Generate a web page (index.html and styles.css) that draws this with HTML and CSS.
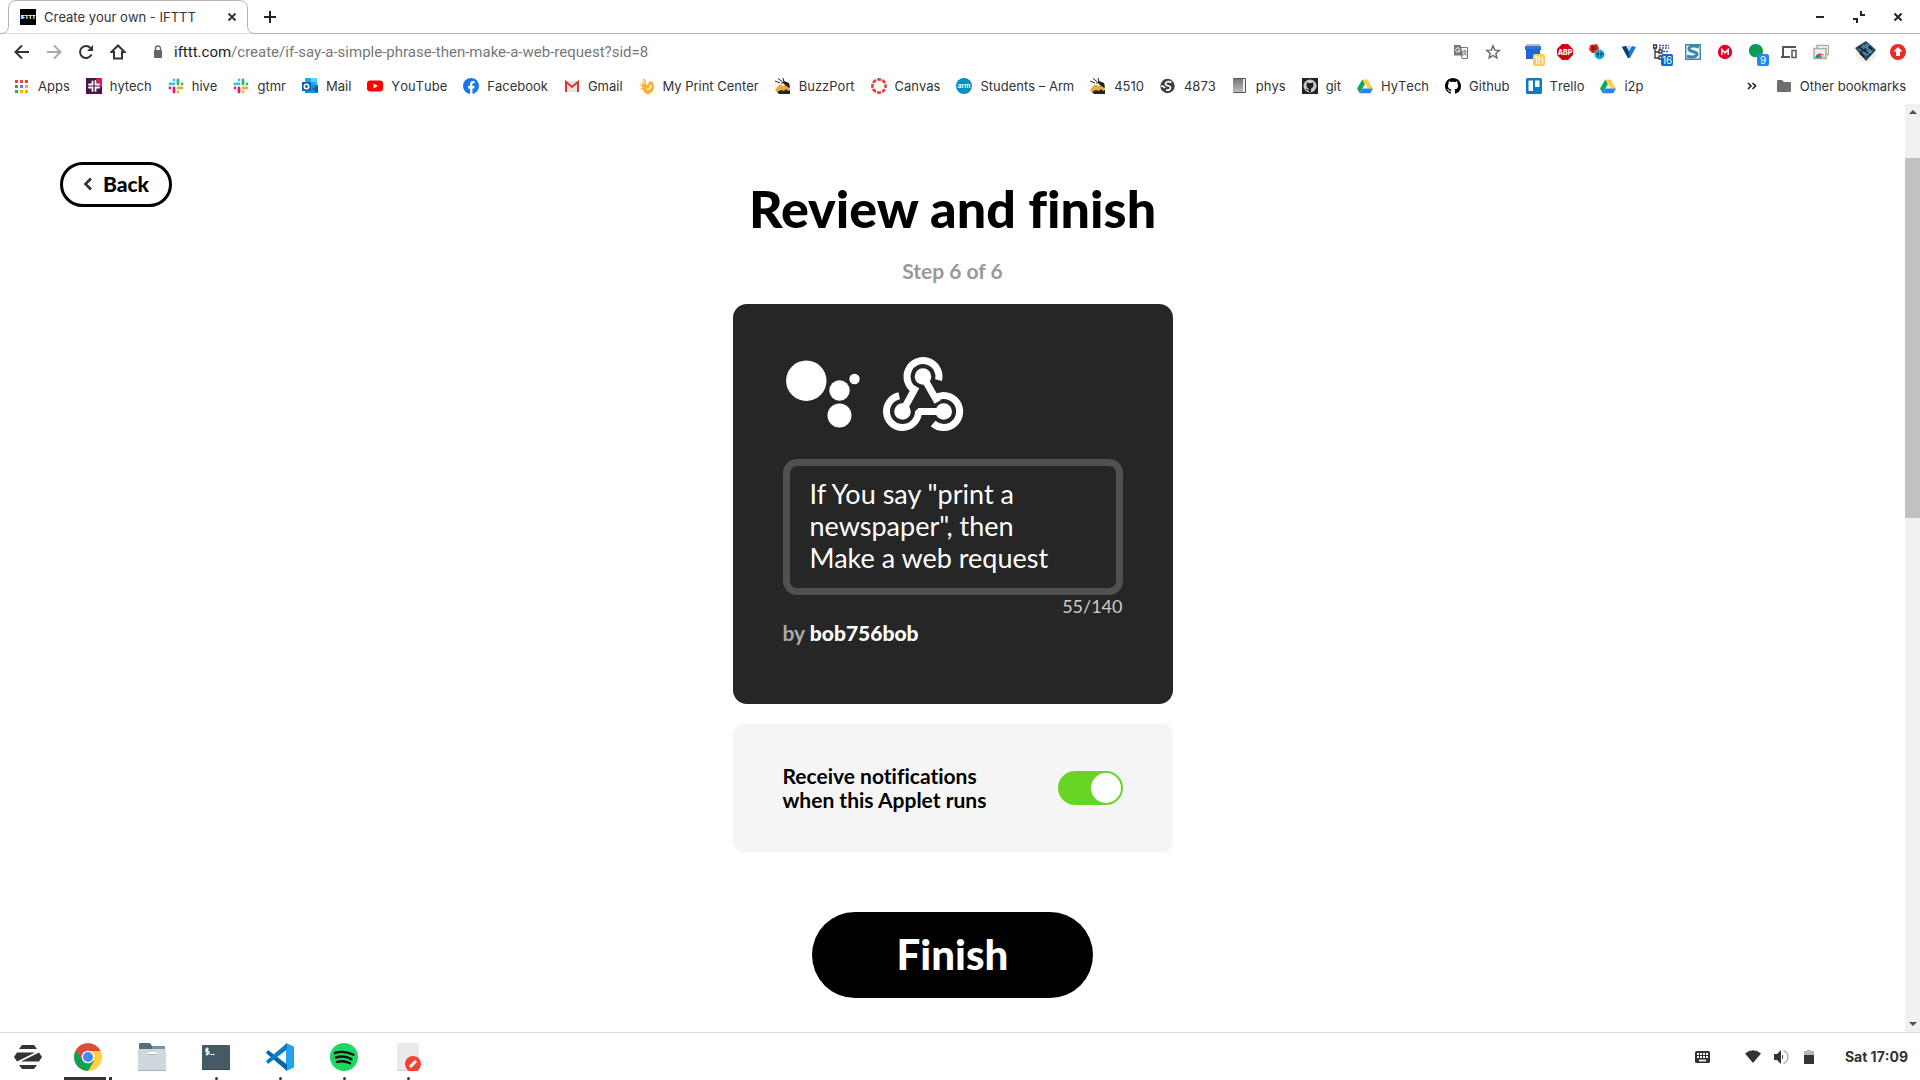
FILE: index.html
```html
<!DOCTYPE html>
<html lang="en">
<head>
<meta charset="utf-8">
<title>Create your own - IFTTT</title>
<link rel="stylesheet" href="styles.css">
</head>
<body>
<svg class="sprite" aria-hidden="true">
  <symbol id="slack" viewBox="0 0 16 16">
    <g fill="none" stroke-width="2.8" stroke-linecap="round">
      <path stroke="#36c5f0" d="M6 2v0M1.9 5.9h4.1"/><path stroke="#2eb67d" d="M10 1.9v4.1M14 6h0"/>
      <path stroke="#ecb22e" d="M10 10h4.1M10 14v0"/><path stroke="#e01e5a" d="M6 10v4.1M2 10h0"/>
    </g>
  </symbol>
  <symbol id="drive" viewBox="0 0 16 16">
    <path fill="#0da960" d="M5.3 1.5 0 10.6l2.7 4.6L8 6z"/><path fill="#ffcf48" d="M5.3 1.5h5.3l5.3 9.1h-5.3z"/><path fill="#2684fc" d="M2.7 15.2 5.4 10.6H16l-2.7 4.6z"/>
  </symbol>
  <symbol id="buzz" viewBox="0 0 16 16">
    <path d="M3 .5l4 3M8 0l1 4M0 3l5 2" stroke="#222" fill="none"/>
    <path fill="#222" d="M6 5l3-2 5 2 1 4-2 3-5-4z"/>
    <path fill="#e9a93c" d="M0 12l4-5 4-1 5 3 2 2v3l-8 1-5-1z"/>
    <path fill="#fff" d="M6 6l2-1 2 2-2 1z"/><path fill="#222" d="M2 14l4-2 3 1 2-2 2 2 2-1v4H4z"/>
  </symbol>
  <symbol id="octocat" viewBox="0 0 16 16">
    <path d="M8 0C3.58 0 0 3.58 0 8c0 3.54 2.29 6.53 5.47 7.59.4.07.55-.17.55-.38 0-.19-.01-.82-.01-1.49-2.01.37-2.53-.49-2.69-.94-.09-.23-.48-.94-.82-1.13-.28-.15-.68-.52-.01-.53.63-.01 1.08.58 1.23.82.72 1.21 1.87.87 2.33.66.07-.52.28-.87.51-1.07-1.78-.2-3.64-.89-3.64-3.95 0-.87.31-1.59.82-2.15-.08-.2-.36-1.02.08-2.12 0 0 .67-.21 2.2.82.64-.18 1.32-.27 2-.27s1.36.09 2 .27c1.53-1.04 2.2-.82 2.2-.82.44 1.1.16 1.92.08 2.12.51.56.82 1.27.82 2.15 0 3.07-1.87 3.75-3.65 3.95.29.25.54.73.54 1.48 0 1.07-.01 1.93-.01 2.2 0 .21.15.46.55.38A8.01 8.01 0 0 0 16 8c0-4.42-3.58-8-8-8z"/>
  </symbol>
</svg>

<header class="browser">
  <div class="tabstrip">
    <div class="tab">
      <svg class="tab-shape" viewBox="0 0 256 34" aria-hidden="true"><path d="M0 33.5C6 33.500 8.500 31 8.500 25V9Q8.500 .5 16 .5H239.500Q247.500 .5 247.500 9V25C247.500 31 250 33.500 256 33.500" fill="#fff" stroke="#b4b4b4"/></svg>
      <svg class="icon" viewBox="0 0 16 16" aria-hidden="true"><path d="M0 0h16v16H0z"/><text class="ifttt" x="8" y="10" text-anchor="middle">IFTTT</text></svg>
      <span class="tab-title">Create your own - IFTTT</span>
      <button class="tool close" aria-label="Close tab"><svg viewBox="0 0 16 16"><path d="M4.500 4.500l7 7M11.500 4.500l-7 7" stroke="#333" stroke-width="1.800"/></svg></button>
    </div>
    <button class="tool new-tab" aria-label="New tab"><svg viewBox="0 0 16 16"><path d="M8 2v12M2 8h12" stroke="#222" stroke-width="2"/></svg></button>
    <div class="window-buttons">
      <button class="tool" aria-label="Minimise"><svg viewBox="0 0 16 16"><path d="M4 8h8" stroke="#222" stroke-width="2"/></svg></button>
      <button class="tool" aria-label="Restore"><svg viewBox="0 0 16 16"><path d="M10 2v4h4M2 10h4v4" stroke="#222" stroke-width="2" fill="none"/></svg></button>
      <button class="tool" aria-label="Close"><svg viewBox="0 0 16 16"><path d="M4.500 4.500l7 7M11.500 4.500l-7 7" stroke="#222" stroke-width="2"/></svg></button>
    </div>
  </div>

  <div class="toolbar">
    <button class="tool" aria-label="Back"><svg viewBox="0 0 16 16"><path d="M15 8H2M8 1.500 1.500 8 8 14.500" stroke="#333" stroke-width="2" fill="none"/></svg></button>
    <button class="tool" aria-label="Forward"><svg viewBox="0 0 16 16"><path d="M1 8h13M8 1.500 14.500 8 8 14.500" stroke="#aaa" stroke-width="2" fill="none"/></svg></button>
    <button class="tool" aria-label="Reload"><svg viewBox="0 0 16 16"><path d="M13.500 10.500A6 6 0 1 1 12.500 4" stroke="#333" stroke-width="2" fill="none"/><path d="M15 1v6H9z" fill="#333"/></svg></button>
    <button class="tool" aria-label="Home"><svg viewBox="0 0 16 16"><path d="M8 1.500 1.500 8H4v6.500h8V8h2.500z" stroke="#333" stroke-width="2" fill="none"/></svg></button>
    <label class="address">
      <span class="tool"><svg viewBox="0 0 16 16" aria-label="Secure"><path d="M4.500 6.500h7v7h-7z" fill="#666" stroke="#666" stroke-linejoin="round"/><path d="M5.500 7V4.500a2.500 2.500 0 0 1 5 0V7" fill="none" stroke="#666" stroke-width="1.500"/></svg></span>
      <span class="url" contenteditable="true" role="textbox" aria-label="Address" spellcheck="false"><span class="host">ifttt.com</span>/create/if-say-a-simple-phrase-then-make-a-web-request?sid=8</span>
    </label>
    <div class="extensions">
      <button class="tool" aria-label="Translate"><svg viewBox="0 0 16 16"><path d="M7 3.500h7.500v11H9z" fill="#fff" stroke="#777"/><path d="M1 1h6.500l3 10.500H1z" fill="#777"/><path d="M6.800 5A2.200 2.200 0 1 0 7 6.500H5" stroke="#fff" fill="none"/><path d="M9.500 7h4M11.500 6v1M13 7c0 2-1 3-2.500 4M10.500 8l3 3.500" stroke="#777" fill="none"/></svg></button>
      <button class="tool" aria-label="Bookmark this page"><svg viewBox="0 0 16 16"><path d="M8 1.800l1.700 4.300 4.600.3-3.500 3 1.100 4.500L8 11.500l-3.900 2.400 1.100-4.500-3.500-3 4.600-.3z" stroke="#666" stroke-width="1.400" fill="none"/></svg></button>
    </div>
    <div class="extensions">
      <button class="tool" aria-label="Tab timer"><svg viewBox="0 0 16 16"><path d="M1 0h14v3H1z" fill="#bbb"/><path d="M0 2h16v4h-1v9H1V6H0z" fill="#1f66d0"/><path d="M0 2h16v3H0z" fill="#2d77e5"/></svg><span class="badge amber">1h</span></button>
      <button class="tool" aria-label="Adblock Plus"><svg viewBox="0 0 16 16"><path d="M5 0h6l5 5v6l-5 5H5l-5-5V5z" fill="#d4000f"/><text class="abp" x="8" y="11" text-anchor="middle">ABP</text></svg></button>
      <button class="tool" aria-label="Chips"><svg viewBox="0 0 16 16"><path d="M1 1l7-1 2 4-1 5H3L0 6z" fill="#e5332f"/><path d="M2 3h6M2 5h6M4 1v7" stroke="#611"/><circle cx="10.500" cy="10.500" r="5" fill="#16b5e5"/><path d="M7 10h3M9 8v5M12 8v5M12 10h3" stroke="#133"/></svg></button>
      <button class="tool" aria-label="Vimium"><svg viewBox="0 0 16 16"><path d="M1 3l4-1 3 5 3-5 4 1-6 11H7z" fill="#147bd1"/><path d="M1 3l4-1 3 6v6H7z" fill="#123c78"/><path d="M6 2h4L8 7z" fill="#9fd8f5"/></svg></button>
      <button class="tool" aria-label="Site tree"><svg viewBox="0 0 16 16"><path d="M.5 1h3v3h-3zM2 4v10h4M2 8h4M6 6h3v3H6zM6 12h3v3H6z" fill="none" stroke="#333" stroke-width="1.300"/><path d="M6 1.500h10M6 4h10M10 7.500h6" stroke="#355b9f" stroke-width="1.500" stroke-dasharray="2 1"/></svg><span class="badge blue">16</span></button>
      <button class="tool" aria-label="Stylish"><svg viewBox="0 0 16 16"><path d="M.7.7h14.600v14.600H.7z" fill="#eef6fa" stroke="#3b87ac" stroke-width="1.400"/><path d="M14 3C9 1 4 2 4 5s8 2.500 8 5-5 4-10 2" stroke="#3b87ac" stroke-width="3" fill="none"/></svg></button>
      <button class="tool" aria-label="Mega"><svg viewBox="0 0 16 16"><circle cx="8" cy="8" r="7.200" fill="#e8002a"/><path d="M4.800 11V5.500L8 8.800l3.200-3.300V11" fill="none" stroke="#fff" stroke-width="1.500"/></svg></button>
      <button class="tool" aria-label="Hangouts"><svg viewBox="0 0 16 16"><path d="M7 0a7 7 0 0 1 7 7c0 4-3 7-6 8v-2A6.600 6.600 0 1 1 7 0z" fill="#0b9d58"/></svg><span class="badge sky">9</span></button>
      <button class="tool" aria-label="Devices"><svg viewBox="0 0 16 16"><path d="M2 12V3h13M0 13h9" stroke="#555" stroke-width="2" fill="none"/><path d="M11 6.500h4v7h-4z" stroke="#555" stroke-width="1.500" fill="none"/></svg></button>
      <button class="tool" aria-label="Web captures"><svg viewBox="0 0 16 16"><path d="M4 4V1.500h11.500v9H13" fill="none" stroke="#aaa" stroke-width="1.500"/><path d="M1 4.500h12v10H1z" fill="#eee" stroke="#aaa" stroke-width="1.500"/><path d="M2.500 14a4.500 4.500 0 0 1 9 0z" fill="#db4437"/><path d="M2.500 14a4.500 4.500 0 0 1 1.500-3.500L7 14z" fill="#0f9d58"/><path d="M11.500 14a4.500 4.500 0 0 0-1-3H7v3z" fill="#ffcd40"/><circle cx="7" cy="12.800" r="1.800" fill="#4285f4"/></svg></button>
    </div>
    <div class="account">
      <button class="tool" aria-label="Profile"><svg class="avatar" viewBox="0 0 22 22"><circle cx="11" cy="11" r="10.500" fill="#f2eeee"/><path d="M0 7 11 0l10 9-10 11z" fill="#364450"/><path d="M3 8l5-3 2 2-5 3zM10 4l2-2 3 3-2 2zM7 12l8-5 3 2-7 6z" fill="#2e8dbd"/><path d="M5 12l4 4M9 9l6 5M14 5l3 4M4 6l4 3" stroke="#111" stroke-width="1.500"/><path d="M8 4l5 4M12 14l5-4" stroke="#9ab"/></svg></button>
      <button class="tool" aria-label="Update"><svg viewBox="0 0 16 16"><circle cx="8" cy="8" r="8" fill="#e62d27"/><path d="M8 3l4.500 4.500H10V12H6V7.500H3.500z" fill="#fff"/></svg></button>
    </div>
  </div>

  <nav class="bookmarks" aria-label="Bookmarks">
    <a href="#"><svg class="icon" viewBox="0 0 16 16"><path d="M1 2h3v3H1zM6 2h3v3H6zM11 2h3v3h-3z" fill="#ea4335"/><path d="M1 7h3v3H1zM1 12h3v3H1z" fill="#34a853"/><path d="M6 7h3v3H6z" fill="#4285f4"/><path d="M11 7h3v3h-3zM6 12h3v3H6zM11 12h3v3h-3z" fill="#fbad05"/></svg>Apps</a>
    <a href="#"><svg class="icon" viewBox="0 0 16 16"><path d="M0 0h16v16H0z" fill="#4a154b"/><path d="M10 0h6v9h-3z" fill="#d81e56"/><path d="M6.500 3.500v3H3M9.500 3v3.500h3.500M13 9.500H9.500v3.500M3 9.500h3.500V13" fill="none" stroke="#fff" stroke-width="1.800" stroke-linecap="round"/></svg>hytech</a>
    <a href="#"><svg class="icon"><use href="#slack"/></svg>hive</a>
    <a href="#"><svg class="icon"><use href="#slack"/></svg>gtmr</a>
    <a href="#"><svg class="icon" viewBox="0 0 16 16"><path d="M3 0h12v7H3z" fill="#28a8ea"/><path d="M9 0h6v4H9z" fill="#50d9ff"/><path d="M3 7h13v8H3z" fill="#1490df"/><path d="M10 11l6-4v8z" fill="#0a5fb5"/><path d="M0 4h9v9H0z" fill="#0f65b8"/><circle cx="4.500" cy="8.500" r="2.200" fill="none" stroke="#fff" stroke-width="1.500"/></svg>Mail</a>
    <a href="#"><svg class="icon" viewBox="0 0 16 16"><rect y="2.500" width="16" height="11" rx="3" fill="#f00"/><path d="M6.500 5.500v5L11 8z" fill="#fff"/></svg>YouTube</a>
    <a href="#"><svg class="icon" viewBox="0 0 16 16"><circle cx="8" cy="8" r="8" fill="#1478f0"/><path d="M7 16v-5.500H5V8h2V6.300C7 4.200 8.200 3 10 3l1.700.2v2h-1C9.700 5.200 9.400 5.800 9.400 6.500V8h2.200l-.4 2.500H9.400V16z" fill="#fff"/></svg>Facebook</a>
    <a href="#"><svg class="icon" viewBox="0 0 16 16"><path d="M1 3h14v11H1z" fill="#e7e3e3"/><path d="M2 14V4l6 5 6-5v10" fill="none" stroke="#d93a30" stroke-width="2"/></svg>Gmail</a>
    <a href="#"><svg class="icon" viewBox="0 0 16 16"><path d="M5 0c3 3 0 4 3 7 2-1 1-3 3-4 3 0 4 3 4 6 0 4-3 7-6 7-3 0-4-2-5-4L1 10l3-.5L0 6l4 1-2-4 4 3C5 4 4 2 5 0z" fill="#fbb034"/><path d="M8 11c2 1 4-1 4-4" stroke="#fff" stroke-width="1.500" fill="none"/></svg>My Print Center</a>
    <a href="#"><svg class="icon"><use href="#buzz"/></svg>BuzzPort</a>
    <a href="#"><svg class="icon" viewBox="0 0 16 16"><circle cx="8" cy="8" r="6.600" fill="none" stroke="#e63b36" stroke-width="2.600" stroke-dasharray="4 1.184" stroke-dashoffset="2"/></svg>Canvas</a>
    <a href="#"><svg class="icon" viewBox="0 0 16 16"><circle cx="8" cy="8" r="8" fill="#0091bd"/><text class="arm" x="8" y="10" text-anchor="middle">arm</text></svg>Students – Arm</a>
    <a href="#"><svg class="icon"><use href="#buzz"/></svg>4510</a>
    <a href="#"><svg class="icon" viewBox="0 0 16 16"><circle cx="7.500" cy="8" r="7.200" fill="#3c3e40"/><path d="M11.500 4.500C9 3 5.500 3.500 5.500 6s5 1 5 3.500S8 12.500 6 12M1 8c1.500 0 3 .5 4 2" fill="none" stroke="#fff" stroke-width="1.700"/></svg>4873</a>
    <a href="#"><svg class="icon" viewBox="0 0 16 16"><defs><linearGradient id="book" x2="0" y2="1"><stop stop-color="#777"/><stop offset="1" stop-color="#bbb"/></linearGradient></defs><path d="M1.500.5h12v14h-12z" fill="#eee" stroke="#555"/><path d="M1 1h10v13H1z" fill="url(#book)"/></svg>phys</a>
    <a href="#"><svg class="icon" viewBox="0 0 16 16"><path d="M0 0h16v16H0z" fill="#222"/><circle cx="8" cy="8" r="6.500" fill="#ccc"/><path d="M5 4l1 1h4l1-1 .5 3c0 2-1 3-2.500 3.500V14H7v-3C5.500 10 4.500 9 4.500 7z" fill="#222"/><path d="M4 11l3 1.500" stroke="#222"/></svg>git</a>
    <a href="#"><svg class="icon"><use href="#drive"/></svg>HyTech</a>
    <a href="#"><svg class="icon"><use href="#octocat"/></svg>Github</a>
    <a href="#"><svg class="icon" viewBox="0 0 16 16"><rect width="16" height="16" rx="1.500" fill="#0a7dc0"/><path d="M2.500 2.500H7v10.500H2.500zM9 2.500h4.500v6.500H9z" fill="#fff"/></svg>Trello</a>
    <a href="#"><svg class="icon"><use href="#drive"/></svg>i2p</a>
    <button class="tool more" aria-label="More bookmarks"><svg viewBox="0 0 16 16"><path d="M4 5l3 3-3 3M8.500 5l3 3-3 3" fill="none" stroke="#222" stroke-width="1.600"/></svg></button>
    <a href="#"><svg class="icon" viewBox="0 0 16 16"><path d="M1 3q0-1 1-1h4l2 2h6q1 0 1 1v8q0 1-1 1H2q-1 0-1-1z" fill="#6e6e6e"/></svg>Other bookmarks</a>
  </nav>
</header>

<div class="viewport">
  <main class="page">
    <button class="back"><svg viewBox="0 0 10 14" aria-hidden="true"><path d="M8 1.500 2.500 7 8 12.500" fill="none" stroke="#333" stroke-width="2.600"/></svg>Back</button>
    <form class="review">
      <h1>Review and finish</h1>
      <p class="step">Step 6 of 6</p>
      <section class="applet">
        <div class="services">
          <svg viewBox="0 0 80 80" role="img" aria-label="Google Assistant" fill="#fff"><circle cx="23.300" cy="28.700" r="20.200"/><circle cx="56.500" cy="38.500" r="10.200"/><circle cx="71.500" cy="27" r="5.200"/><circle cx="56.500" cy="63.500" r="12"/></svg>
          <svg viewBox="0 0 80 80" role="img" aria-label="Webhooks"><g fill="none" stroke="#fff" stroke-width="7"><path d="M55.600 28.100A16 16 0 1 0 32 38.400"/><path d="M33.200 34.500 19.500 59.500"/><path d="M16.200 43.800A16 16 0 1 0 35.400 61L37 59.500H60"/><path d="M40 24.500 54.600 50"/><path d="M52.700 45.600A16 16 0 1 1 50.100 71.500"/></g><g fill="#fff"><circle cx="40" cy="24.500" r="8.300"/><circle cx="19.500" cy="59.500" r="8.300"/><circle cx="60.700" cy="59.500" r="8.300"/></g></svg>
        </div>
        <textarea rows="3" aria-label="Applet title" spellcheck="false">If You say "print a
newspaper", then
Make a web request</textarea>
        <p class="count">55/140</p>
        <p class="author">by <b>bob756bob</b></p>
      </section>
      <section class="notify">
        <label for="notify">Receive notifications when this Applet runs</label>
        <input type="checkbox" id="notify" checked>
      </section>
      <button class="finish" type="button">Finish</button>
    </form>
  </main>
  <div class="scrollbar" aria-hidden="true">
    <svg viewBox="0 0 15 17"><path d="M4 10l4-4 4 4z" fill="#505050"/></svg>
    <div class="track"><div class="thumb"></div></div>
    <svg viewBox="0 0 15 17"><path d="M4 7l4 4 4-4z" fill="#505050"/></svg>
  </div>
</div>

<footer class="taskbar">
  <button class="app menu" aria-label="Menu"><svg viewBox="0 0 28 28"><g fill="#333"><path d="M8 2h12l3 4H5zM5 22h18l-3 4H8z"/><path d="M3 9.500h18L3 18.500l-3-4.500zM25 9.500l3 4.500-3 4.500H7z"/></g></svg></button>
  <button class="app active" aria-label="Chrome"><svg viewBox="0 0 28 28"><circle cx="14" cy="14" r="14" fill="#ffd040"/><path d="M14 14 1.900 7A14 14 0 0 0 14 28l6-10z" fill="#149e5b"/><path d="M1.900 7A14 14 0 0 1 26.500 8H14l-6 9z" fill="#dc4d40"/><circle cx="14" cy="14" r="6.300" fill="#fff"/><circle cx="14" cy="14" r="5" fill="#4688f4"/></svg></button>
  <button class="app" aria-label="Files"><svg viewBox="0 0 28 28"><path d="M1 1q0-1 1-1h10l2 3h12q1 0 1 1v6H1z" fill="#546e7a"/><path d="M14 3h13v4H14z" fill="#7892a0"/><path d="M0 7q0-1 1-1h26q1 0 1 1v20q0 1-1 1H1q-1 0-1-1z" fill="#cfd8dd"/><path d="M10 9h8v2h-8z" fill="#fff"/><path d="M0 27.500h28M10 11.500h8" stroke="#a8b3b9"/></svg></button>
  <button class="app running" aria-label="Terminal"><svg viewBox="0 0 28 28"><rect y="2" width="28" height="25" rx="1" fill="#455a64"/><path d="M0 26.500h28" stroke="#37484f"/><path d="M7 6H4v2.500h3V11H3.500M5.200 4.500v8M8.500 11.500h4" stroke="#fff" stroke-width="1.200" fill="none"/></svg></button>
  <button class="app running" aria-label="Code"><svg viewBox="0 0 28 28"><path d="M20 0 28 3.500V24.500L20 28z" fill="#25a2f0"/><path d="M2 7 21 21.500V28L0 10z" fill="#0065a9"/><path d="M2 21 21 6.500V0L0 18z" fill="#0a7cc8"/></svg></button>
  <button class="app running" aria-label="Spotify"><svg viewBox="0 0 28 28"><circle cx="14" cy="14" r="14" fill="#1ed760"/><path d="M5 10c6-2 13-1 18.500 1.800M6 14.500c5-1.500 11-1 15.500 1.700M7 18.800c4-1 9-.7 13 1.500" fill="none" stroke="#111" stroke-width="2.400" stroke-linecap="round"/></svg></button>
  <button class="app running" aria-label="Text editor"><svg viewBox="0 0 28 28"><path d="M3 0h22v28H3z" fill="#eaeaea"/><path d="M3 28h22" stroke="#bbb"/><circle cx="19" cy="21" r="8" fill="#f44336"/><path d="M16 24l6-6" stroke="#fff" stroke-width="3"/></svg></button>
  <div class="tray">
    <svg viewBox="0 0 16 16" aria-label="Keyboard"><rect x="0" y="2" width="15" height="12" rx="1.500" fill="#333"/><path d="M2 5h12M2 8h12" stroke="#fff" stroke-width="1.800" stroke-dasharray="2 1"/><path d="M4 11.500h7" stroke="#fff" stroke-width="1.800"/></svg>
    <svg class="wifi" viewBox="0 0 16 16" aria-label="Wi-Fi"><path d="M0 4.500Q8-2 16 4.500L8 14z" fill="#333"/></svg>
    <svg viewBox="0 0 16 16" aria-label="Volume"><path d="M1 5h3l4-4v14l-4-4H1zM9 5q2 3 0 6z" fill="#333"/><path d="M10.500 1.500a7 7 0 0 1 0 13" fill="none" stroke="#b5b5b5" stroke-width="1.500"/></svg>
    <svg viewBox="0 0 16 16" aria-label="Battery"><path d="M3 2h3V1h4v1h3v5H3z" fill="#b5b5b5"/><path d="M3 6h10v9H3z" fill="#333"/></svg>
    <time>Sat 17:09</time>
  </div>
</footer>
</body>
</html>
```

FILE: styles.css
```css
* {
  box-sizing: border-box;
}

body {
  margin: 0;
  min-height: 100vh;
  display: flex;
  flex-direction: column;
  background: #fff;
  color: #333;
  font: 13px/20px Inter, sans-serif;
  font-kerning: none;
}

button {
  margin: 0;
  padding: 0;
  border: 0;
  background: none;
  color: inherit;
  font: inherit;
  cursor: pointer;
}

h1,
p {
  margin: 0;
}

.sprite {
  display: none;
}

/* Browser chrome */

.icon {
  width: 16px;
  height: 16px;
  flex: none;
}

.tool {
  position: relative;
  flex: none;
  display: flex;
  align-items: center;
  justify-content: center;
  width: 32px;
  height: 32px;
}

.tool svg {
  width: 16px;
  height: 16px;
}

.tool .avatar {
  width: 22px;
  height: 22px;
}

.tabstrip {
  display: flex;
  align-items: center;
  height: 34px;
  border-bottom: 1px solid #b4b4b4;
}

.tab {
  position: relative;
  display: flex;
  align-items: center;
  gap: 8px;
  width: 256px;
  height: 34px;
  padding-left: 20px;
}

.tab-shape {
  position: absolute;
  left: 0;
  top: 0;
  width: 256px;
  height: 34px;
}

.tab > :not(.tab-shape) {
  position: relative;
}

.close {
  margin-left: auto;
  margin-right: 8px;
}

.new-tab {
  margin-left: -2px;
}

.ifttt {
  fill: #fff;
  font: 900 5px Inter, sans-serif;
}

.window-buttons {
  display: flex;
  gap: 7px;
  margin-left: auto;
  padding-right: 6px;
}

.toolbar {
  display: flex;
  align-items: center;
  height: 36px;
  padding: 0 6px;
}

.address {
  flex: 1;
  display: flex;
  align-items: center;
  margin-left: 8px;
  cursor: text;
}

.url {
  color: #777;
  font: 15px/20px Roboto, sans-serif;
  outline: none;
}

.host {
  color: #222;
}

.extensions {
  display: flex;
  margin-right: 8px;
}

.account {
  display: flex;
  margin-left: 5px;
}

.badge {
  position: absolute;
  left: 16px;
  top: 18px;
  min-width: 12px;
  padding: 0 1px;
  border-radius: 2px;
  color: #fff;
  font: 10px/12px Inter, sans-serif;
}

.amber {
  background: #fdcb62;
}

.blue {
  background: #1467c8;
}

.sky {
  background: #2588f0;
}

.abp {
  fill: #fff;
  font: 800 7px Inter, sans-serif;
}

.arm {
  fill: #fff;
  font: 600 7px Inter, sans-serif;
}

.bookmarks {
  display: flex;
  align-items: center;
  gap: 16px;
  height: 34px;
  padding: 0 14px 3px;
}

.bookmarks a {
  display: flex;
  align-items: center;
  gap: 8px;
  color: inherit;
  text-decoration: none;
  white-space: nowrap;
}

.more {
  width: 16px;
  margin-left: auto;
}

/* Page */

.viewport {
  flex: 1;
  display: flex;
}

.page {
  position: relative;
  flex: 1;
  color: #000;
  font-family: Lato, sans-serif;
  font-kerning: auto;
  font-variant-ligatures: none;
}

.back {
  position: absolute;
  left: 60px;
  top: 58px;
  display: flex;
  align-items: center;
  justify-content: center;
  gap: 10px;
  width: 112px;
  height: 45px;
  padding-bottom: 2px;
  border: 3px solid #000;
  border-radius: 23px;
  font-size: 21px;
  font-weight: 900;
}

.back svg {
  width: 10px;
  height: 14px;
}

.review {
  display: flex;
  flex-direction: column;
  align-items: center;
  padding: 74px 20px 34px;
}

h1 {
  font-size: 52px;
  font-weight: 900;
  line-height: 60px;
}

.step {
  margin: 20px 0;
  color: #999;
  font-size: 21px;
  font-weight: 700;
  line-height: 26px;
}

.applet,
.notify {
  width: 100%;
  max-width: 440px;
  padding: 50px;
}

.applet {
  border-radius: 14px;
  background: #262626;
  color: #fff;
}

.services {
  display: flex;
  gap: 20px;
  margin-top: -2px;
}

.services svg {
  width: 80px;
  height: 80px;
  overflow: visible;
}

.applet textarea {
  display: block;
  width: 100%;
  margin-top: 27px;
  padding: 12px 20px 14px;
  border: 7px solid #505050;
  border-radius: 14px;
  background: none;
  color: inherit;
  font: 27px/32px Lato, sans-serif;
  resize: none;
  overflow: hidden;
  outline: none;
}

.count {
  color: #ccc;
  font-size: 18px;
  line-height: 22px;
  text-align: right;
}

.author {
  padding: 3px 0 8px;
  color: #aaa;
  font-size: 21px;
  line-height: 26px;
  font-weight: 700;
}

.author b {
  color: #fff;
}

.notify {
  display: flex;
  align-items: center;
  justify-content: space-between;
  gap: 20px;
  margin: 20px 0 60px;
  padding: 40px 50px;
  border-radius: 10px;
  background: #f5f5f5;
  font-size: 21px;
  font-weight: 700;
  line-height: 24px;
}

.notify label {
  max-width: 220px;
}

.notify input {
  appearance: none;
  flex: none;
  width: 65px;
  height: 34px;
  margin: 0;
  padding: 2px;
  border-radius: 17px;
  background: #ccc;
}

.notify input::before {
  content: "";
  display: block;
  width: 30px;
  height: 30px;
  border-radius: 50%;
  background: #fff;
}

.notify input:checked {
  background: #67d426;
}

.notify input:checked::before {
  margin-left: auto;
}

.finish {
  width: 281px;
  height: 86px;
  padding-bottom: 2px;
  border-radius: 43px;
  background: #000;
  color: #fff;
  font-size: 42px;
  font-weight: 900;
}

.scrollbar {
  display: flex;
  flex-direction: column;
  width: 15px;
  background: #f1f1f1;
}

.scrollbar svg {
  width: 15px;
  height: 17px;
}

.track {
  flex: 1;
  padding-top: 37px;
}

.thumb {
  height: 42%;
  background: #c1c1c1;
}

/* Desktop panel */

.taskbar {
  display: flex;
  height: 48px;
  border-top: 1px solid #dcdcdc;
}

.app {
  position: relative;
  display: flex;
  align-items: center;
  justify-content: center;
  width: 64px;
}

.app svg {
  width: 28px;
  height: 28px;
}

.menu {
  width: 56px;
}

.running::after {
  content: "";
  position: absolute;
  left: 31px;
  bottom: 0;
  width: 3px;
  height: 3px;
  border-radius: 50%;
  background: #333;
}

.active::after {
  content: "";
  position: absolute;
  left: 8px;
  bottom: 0;
  width: 48px;
  height: 3px;
  background: linear-gradient(to right, #333 42px, transparent 42px 45px, #333 45px);
}

.tray {
  display: flex;
  align-items: center;
  gap: 12px;
  margin-left: auto;
  padding-right: 12px;
}

.tray svg {
  width: 16px;
  height: 16px;
}

.tray .wifi {
  margin-left: 22px;
}

.tray time {
  margin-left: 16px;
  font-size: 14px;
  font-weight: 700;
}
```
